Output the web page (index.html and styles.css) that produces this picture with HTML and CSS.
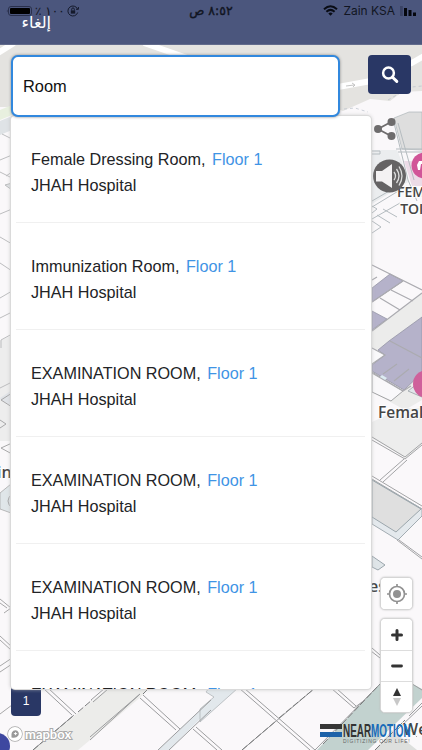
FILE: index.html
```html
<!DOCTYPE html>
<html lang="en">

<head>
    <meta charset="UTF-8">
    <meta name="viewport" content="width=device-width, initial-scale=1.0">
    <title>Find a Room</title>
    <link rel="stylesheet" href="styles.css">
</head>

<body>
    <div class="screen">
        <header class="top-bar">
            <div class="status">
                <div class="status-left">
                    <svg class="battery" width="26" height="10" viewBox="0 0 26 10">
                        <path d="M1.5 3.5Q0 5 1.5 6.5z" fill="#252b44" />
                        <rect x="2.5" y=".5" width="23" height="9" rx="2.5" fill="none" stroke="#29304c" />
                        <rect x="4" y="2" width="20" height="6" rx="1" fill="#000" />
                    </svg>
                    <span class="percent" dir="ltr">٪ ١٠٠</span>
                    <svg width="12" height="12" viewBox="0 0 12 12" fill="none" stroke="#151a2b">
                        <path d="M10.6 4.2A5 5 0 1 0 10.7 7.5M9 4.3h2.4V2" />
                        <rect x="3.8" y="5.4" width="4.4" height="3.2" fill="#151a2b" stroke="none" />
                        <path d="M4.7 5.5V4.2a1.3 1.3 0 0 1 2.6 0v1.3" />
                    </svg>
                </div>
                <span class="clock" dir="rtl">٨:٥٢ ص</span>
                <div class="status-right">
                    <svg width="15" height="11" viewBox="0 0 15 11" fill="none" stroke="#090c15" stroke-width="2">
                        <path d="M1 4.2Q7.5-1.8 14 4.2M3.4 6.7Q7.5 3 11.6 6.7" />
                        <path d="M5.3 8.4Q7.5 6.5 9.7 8.4L7.5 10.8z" fill="#090c15" stroke="none" />
                    </svg>
                    <span class="carrier">Zain KSA</span>
                    <svg width="16" height="10" viewBox="0 0 16 10">
                        <path d="M0 0h2.8v10H0z" fill="#3a4365" />
                        <path d="M4 2h3v8H4zM8.5 4h3v6h-3zM13 6.5h3V10h-3z" fill="#05070e" />
                    </svg>
                </div>
            </div>
            <a class="cancel" dir="rtl">إلغاء</a>
        </header>

        <main class="map-area">
            <!-- Floor plan -->
            <svg class="floor-plan" width="422" height="705" viewBox="0 45 422 705">
                <rect y="45" width="422" height="705" fill="#faf8fa" />
                <path d="M0 45h422v46l-20 1-12 9-20-2-27 12-12-4H0z" fill="#e4e3e0" />
                <path d="M0 110l12-5v10L0 120z" fill="#e8f0df" />
                <path d="M0 121l12-5v14L0 135z" fill="#dfe3e6" />
                <path d="M-2 53L14 43M144 43l46 16M338 87l33-6M410 64l14-8" fill="none" stroke="#fff" stroke-width="6" />
                <path d="M346 86l8-1m-2-2 3 2-2 2" fill="none" stroke="#aaa" stroke-width=".7" />
                <path d="M344 109l11-1 13 4M388 100l12-7 2-5 20-2" fill="none" stroke="#b8bec9" stroke-width=".7" stroke-dasharray="3 3" />

                <!-- Left edge -->
                <path d="M0 341l12-6v106H0z" fill="#ededed" />
                <path d="M0 398l12-8v16l-11-6z" fill="#e0e3e7" />
                <g fill="none" stroke="#bcbdbf" stroke-width="1">
                    <path d="M2 134l10 5M0 160l12-5M0 172l12 6M6 176l6-4M0 214l12-5M0 237l12 7M0 263l12 8M0 298l12-7M0 318l12-6M1 348v-8l11-6M0 388l12-6" />
                    <path d="M12 183l-7 2 7 5z" fill="#dfe2e4" />
                </g>
                <path d="M0 493l11-9v29L0 509z" fill="#e0e6e9" stroke="#aaa" stroke-width=".8" />
                <g fill="none" stroke="#a7a7a8" stroke-width="1">
                    <path d="M12 393l-11 7 11 7M0 420l6 4-6 4M12 443l-11 5 11 6M12 494q-8 7 0 14M0 599l11 9-7 5M0 603l7 5M0 636l12 11M0 640l11 10M0 666l12-8M0 672l12-8M0 714l12-9" />
                </g>

                <!-- Right wing -->
                <path d="M394 118l15-6h13v38l-20-1z" fill="#dedede" stroke="#aeb6b9" stroke-width=".7" />
                <path d="M372 150h25l5 12 6 20-36 22z" fill="#ebedef" />
                <path d="M404 161h18v25h-10z" fill="#ecdbe7" />
                <g fill="none" stroke="#b5bcc0" stroke-width="1">
                    <path d="M394 123l14 57 9 21M398 123l16 57M372 154h8v-3h-8M396 149h26M398 152h24" />
                    <path d="M372 201l24-14M372 207l33-20M372 219l28-16M372 233l9-6-9-6M377 215l13 8M383 209l14 8M372 206l5 3-5 4" />
                </g>

                <path d="M372 331l50-38v107l-17 10-33-18z" fill="#ececeb" />
                <path d="M372 422l30-14h20v36l-16 14-34-20z" fill="#ededed" />
                <path d="M372 392v-20l31 19-12 10z" fill="#f9f8fa" stroke="#a3a4a6" />
                <path d="M372 348l14 7-14 9z" fill="#faf9fb" />
                <g fill="#b5b2ca" stroke="#9695a6" stroke-width=".8">
                    <path d="M372 288l18-14 13 7-31 21zM372 311l15 8-15 11zM422 317l-33 24-11 9 7 5-13 10v6l32 19 18-17z" />
                </g>
                <g fill="none" stroke="#ababb0" stroke-width="1.2">
                    <path d="M372 265l50 25M372 280l5-3M403 281l-31 21M391 290l22 11M380 298l20 12M422 293l-50 38M390 341l32 17M372 348l13 7-13 9M383 374l14-10M394 381l15-12M372 373l31 18 8-5" />
                </g>
                <path d="M382 375l5 3-2 2-5-3z" fill="#dcebf2" />
                <path d="M408 391l14-11v17z" fill="#e1e6ea" stroke="#aab0b4" />
                <g fill="none" stroke="#a3a4a6" stroke-width="1">
                    <path d="M372 437l33 20 17-14M372 440l33 19 17-14M404 459l-24 21M407 460l-24 22M372 476l50 30M372 479l50 30M399 540l23 17M397 540l25 19" />
                </g>
                <path d="M372 480l50 29v7l-24 24-26-16z" fill="#e4e9ed" stroke="#a3acb2" />
                <path d="M372 480l49 29-25 23-24-15z" fill="#dfdfdf" stroke="#9ba6ac" />
                <path d="M372 556l13 9-7 5-6-3z" fill="#dfe5e8" stroke="#9ba6ac" />

                <!-- Lower corridors -->
                <path d="M33 750l75-62h40l-5 7-53 45-12 10z" fill="#ececea" />
                <path d="M158 750l53-50v8l-42 42z" fill="#e2e8ec" />
                <path d="M200 722l38-34h-29l-3 4 8 5-14 12z" fill="#e2e8ec" stroke="#a9afb2" stroke-width=".7" />
                <path d="M317 750l65-68h27l13 7v9l-54 52z" fill="#c2d2cf" />
                <path d="M375 750l17-20 25 20z" fill="#dddfdd" />
                <g fill="none" stroke="#9c9d9f" stroke-width="1">
                    <path d="M43 688l29 27M48 688l28 26M33 750l41-35M90 740l50-46M90 737l50-43M143 695l37 34M140 698l36 32M91 700l14-12M93 702l15-13M158 750l53-50M169 750l42-40M193 729l24 21M196 727l26 23" />
                    <path d="M239 688l71 62M244 688l71 62M242 750l73-62M315 750l65-66M331 688l23 20M336 688l20 18M354 708l8-6M372 648l8 7M371 651l9 7M398 729l24-23M404 724l13 13M409 716l13-13M409 682l13 8" />
                </g>
                <path d="M33 750l40-34M78 712l14-12M143 694l6-6M242 750l34-29M279 718l36-30M323 744l57-60M375 750l30-30" fill="none" stroke="#77797a" stroke-dasharray="7 2" />
            </svg>

            <div class="map-labels">
                <svg class="pin pin-toilet" width="27" height="27" viewBox="0 0 27 27">
                    <circle cx="13.5" cy="13.5" r="13" fill="#d15598" />
                    <path d="M8 9h4v3h-2l-1 6H7l-1-5z" fill="#fff" />
                </svg>
                <span class="map-label label-toilet">FEMALE<br>TOILET</span>
                <svg class="pin pin-female" width="28" height="28" viewBox="0 0 28 28">
                    <circle cx="14" cy="14" r="14" fill="#cf609b" />
                </svg>
                <span class="map-label label-female">Female</span>
                <span class="map-label label-left">in</span>
                <span class="map-label label-rest">es</span>
                <span class="map-label label-corner">We</span>
                <span class="blue-pin"></span>
            </div>

            <!-- Search -->
            <div class="search">
                <input class="search-field" type="text" value="Room" aria-label="Search">
                <button class="search-btn" aria-label="Search">
                    <svg width="18" height="18" viewBox="0 0 18 18" fill="none" stroke="#fff">
                        <circle cx="7.5" cy="7" r="5.4" stroke-width="2.5" />
                        <path d="M11.5 11.2l4.3 4.2" stroke-width="3" stroke-linecap="round" />
                    </svg>
                </button>
            </div>

            <ul class="results">
                <li><p>Female Dressing Room, <span class="floor">Floor 1</span></p><p>JHAH Hospital</p></li>
                <li><p>Immunization Room, <span class="floor">Floor 1</span></p><p>JHAH Hospital</p></li>
                <li><p>EXAMINATION ROOM, <span class="floor">Floor 1</span></p><p>JHAH Hospital</p></li>
                <li><p>EXAMINATION ROOM, <span class="floor">Floor 1</span></p><p>JHAH Hospital</p></li>
                <li><p>EXAMINATION ROOM, <span class="floor">Floor 1</span></p><p>JHAH Hospital</p></li>
                <li><p>EXAMINATION ROOM, <span class="floor">Floor 1</span></p></li>
            </ul>

            <!-- Map controls -->
            <div class="map-tools">
                <svg width="24" height="24" viewBox="0 0 24 24" fill="#6e6c6d" stroke="#6e6c6d">
                    <path d="M18 4L5 11l13 7" fill="none" stroke-width="1.8" />
                    <g stroke="none">
                        <circle cx="18.5" cy="4" r="4" />
                        <circle cx="5" cy="11" r="4" />
                        <circle cx="18.5" cy="18" r="4" />
                    </g>
                </svg>
                <svg width="34" height="34" viewBox="0 0 34 34">
                    <circle cx="16.5" cy="17" r="16.5" fill="#656364" />
                    <path d="M3 12h6l10-7v24L9 22.5H3z" fill="#f4f2f3" />
                    <path d="M21 13q3 4 0 8M23.5 10q5 7 0 14M26 7.5q6 9.5 0 19" fill="none" stroke="#ddd" stroke-width="1.3" />
                </svg>
            </div>
            <div class="map-controls">
                <div class="control-group">
                    <button aria-label="Locate">
                        <svg width="22" height="22" viewBox="0 0 22 22" fill="none" stroke="#929292" stroke-width="1.7">
                            <circle cx="11" cy="11" r="7.5" />
                            <circle cx="11" cy="11" r="4" fill="#929292" stroke="none" />
                            <path d="M11 1v3M11 18v3M1 11h3M18 11h3" />
                        </svg>
                    </button>
                </div>
                <div class="control-group">
                    <button aria-label="Zoom in">
                        <svg width="14" height="14" viewBox="0 0 14 14" stroke="#333" stroke-width="3" stroke-linecap="round">
                            <path d="M7 2.5v9M2.5 7h9" />
                        </svg>
                    </button>
                    <button aria-label="Zoom out">
                        <svg width="14" height="14" viewBox="0 0 14 14" stroke="#333" stroke-width="2.8" stroke-linecap="round">
                            <path d="M2.5 7h9" />
                        </svg>
                    </button>
                    <button aria-label="Reset north">
                        <svg width="10" height="18" viewBox="0 0 10 18">
                            <path d="M5 0l4 8H1z" fill="#333" />
                            <path d="M1 10h8l-4 8z" fill="#c8c8c8" />
                        </svg>
                    </button>
                </div>
            </div>

            <button class="level">1</button>

            <div class="mapbox">
                <svg width="16" height="16" viewBox="0 0 16 16">
                    <circle cx="8" cy="8" r="7" fill="#fff" stroke="#a8a8a8" stroke-width="1.4" />
                    <path d="M4.5 11.5q-1-7 4-7.2a3.5 3.5 0 0 1 2.7 5.5q-2 2.7-6.7 1.7z" fill="#999" />
                    <path d="M8.5 5.7l.7 1.3 1.3.6-1.3.7-.7 1.3-.7-1.3-1.3-.7 1.3-.6z" fill="#fff" />
                </svg>
                <span>mapbox</span>
            </div>

            <div class="brand">
                <svg width="22" height="14" viewBox="0 0 22 14">
                    <path d="M0 0h22v5H0z" fill="#363636" />
                    <path d="M0 8h22v5H0z" fill="#1c62a9" />
                </svg>
                <div class="brand-text">
                    <p class="brand-name">NEAR<span class="motion">MOTION</span></p>
                    <p class="brand-line">DIGITIZING OUR LIFE!</p>
                </div>
            </div>
        </main>
    </div>
</body>

</html>
```
FILE: styles.css
```css
* {
    padding: 0;
    margin: 0;
    box-sizing: border-box;
}

body {
    font-family: "Liberation Sans", "DejaVu Sans", sans-serif;
    overflow: hidden;
}

svg {
    display: block;
    flex-shrink: 0;
}

button {
    border: none;
    cursor: pointer;
}

.screen {
    display: flex;
    flex-direction: column;
    width: 422px;
    height: 750px;
}

.top-bar {
    height: 45px;
    background-color: #4b567d;
    border-bottom: 1px solid #626b8c;
}

.status {
    display: grid;
    grid-template-columns: 1fr auto 1fr;
    align-items: center;
    height: 21px;
    padding: 0 6px;
    color: #111522;
}

.status-left,
.status-right {
    display: flex;
    align-items: center;
}

.status-left {
    gap: 3px;
}

.status-right {
    justify-content: flex-end;
    gap: 5px;
}

.percent {
    width: 29px;
    font: 12px/14px "DejaVu Sans", sans-serif;
    white-space: nowrap;
}

.clock {
    font: 12.5px/14px "DejaVu Sans", sans-serif;
    -webkit-text-stroke: .4px #111522;
}

.carrier {
    font: 12px/14px Inter, sans-serif;
}

.cancel {
    display: block;
    width: 30px;
    margin: -8px 0 0 21px;
    color: white;
    font: 16px/20px "DejaVu Sans", sans-serif;
    white-space: nowrap;
}

.map-area {
    position: relative;
    flex: 1;
    overflow: hidden;
}

.floor-plan {
    position: absolute;
    inset: 0;
}

.map-label,
.pin,
.blue-pin {
    position: absolute;
}

.map-label {
    color: #454545;
    font: 600 16px/17px "Open Sans", sans-serif;
    text-align: center;
    white-space: nowrap;
    text-shadow: 0 0 2px #fff, 1px 1px 1px #fff, -1px -1px 1px #fff;
}

.pin-toilet {
    left: 411px;
    top: 107px;
}

.label-toilet {
    left: 397px;
    top: 138px;
    font-size: 14px;
}

.pin-female {
    left: 413px;
    top: 325px;
}

.label-female {
    left: 378px;
    top: 359px;
    font-size: 15.5px;
}

.label-left {
    left: -3px;
    top: 419px;
}

.label-rest {
    left: 369px;
    top: 533px;
}

.label-corner {
    left: 403px;
    top: 676px;
}

.blue-pin {
    left: -16px;
    top: 688px;
    width: 26px;
    height: 26px;
    border-radius: 50%;
    background-color: #3e48a0;
}

.search {
    position: relative;
    display: flex;
    justify-content: space-between;
    align-items: flex-start;
    padding: 10px 11px 0;
    z-index: 2;
}

.search-field {
    width: 329px;
    height: 62px;
    padding: 0 10px;
    border: 2px solid #3188de;
    border-radius: 7px;
    background-color: white;
    color: #111;
    font: 16.4px "Liberation Sans", sans-serif;
    outline: none;
    box-shadow: 0 0 3px #888;
}

.search-btn {
    display: flex;
    justify-content: center;
    align-items: center;
    width: 43px;
    height: 39px;
    border-radius: 4px;
    background-color: #293765;
}

.results {
    position: relative;
    width: 360px;
    height: 573px;
    margin: -1px 0 0 11px;
    padding: 0 6px 0 5px;
    overflow: hidden;
    list-style: none;
    background-color: white;
    border-radius: 4px;
    box-shadow: 0 0 0 1px #dadada, 0 0 4px #bbb;
    z-index: 1;
}

.results li {
    height: 107px;
    padding: 31px 15px 0;
    border-bottom: 1px solid #f0f0f0;
    color: #222326;
    font-size: 16.2px;
    line-height: 25.5px;
}

.floor {
    margin-left: 2px;
    color: #3f94e5;
}

.map-tools {
    position: absolute;
    left: 373px;
    top: 73px;
    display: flex;
    flex-direction: column;
    gap: 17px;
}

.map-controls {
    position: absolute;
    right: 9px;
    top: 532px;
    display: flex;
    flex-direction: column;
    gap: 8px;
    z-index: 1;
}

.control-group {
    width: 33px;
    background-color: white;
    border: 1px solid #d5d5d5;
    border-radius: 5px;
    box-shadow: 0 0 2px #bbb;
    overflow: hidden;
}

.control-group button {
    display: flex;
    justify-content: center;
    align-items: center;
    width: 100%;
    height: 31px;
    background-color: white;
}

.control-group button + button {
    border-top: 1px solid #ddd;
}

.level {
    position: absolute;
    left: 11px;
    top: 640px;
    width: 30px;
    height: 31px;
    border-radius: 4px;
    background-color: #293765;
    color: white;
    font: 12px "Liberation Sans", sans-serif;
}

.mapbox {
    position: absolute;
    left: 7px;
    top: 681px;
    display: flex;
    align-items: center;
    gap: 2px;
    color: white;
    font: bold 13px/14px Lato, sans-serif;
    -webkit-text-stroke: 2px #aaa;
    paint-order: stroke fill;
}

.brand {
    position: absolute;
    left: 320px;
    top: 679px;
    display: flex;
}

.brand-text {
    width: 70px;
    padding-left: 1px;
}

.brand-name {
    width: 116px;
    font: bold 18px/14px "Liberation Sans", sans-serif;
    color: #333;
    transform: scaleX(.55);
    transform-origin: 0 0;
}

.motion {
    color: #176bb9;
}

.brand-line {
    width: 140px;
    font: 5px/7px "Liberation Sans", sans-serif;
    letter-spacing: .75px;
    color: #666;
}
```
